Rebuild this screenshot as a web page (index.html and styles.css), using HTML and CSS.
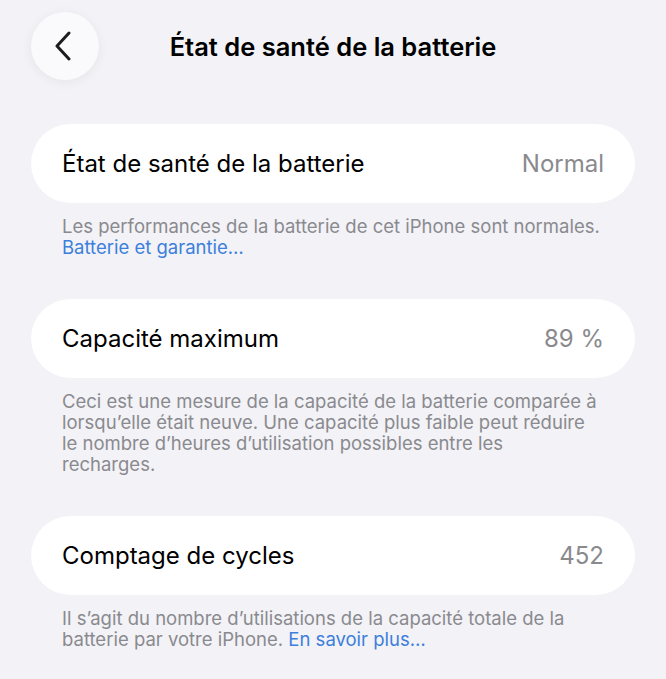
FILE: index.html
```html
<!DOCTYPE html>
<html lang="fr">
<head>
    <meta charset="UTF-8">
    <meta name="viewport" content="width=device-width, initial-scale=1.0">
    <title>État de santé de la batterie</title>
    <link rel="stylesheet" href="styles.css">
</head>
<body>

    <header class="nav">
        <button class="back" type="button" aria-label="Retour">
            <svg width="20" height="30" viewBox="0 0 20 30">
                <polyline points="16,2 4,15 16,28" fill="none" stroke="#1c1c1e" stroke-width="3" stroke-linecap="round" stroke-linejoin="round"/>
            </svg>
        </button>
        <h1 class="nav-title">État de santé de la batterie</h1>
        <span></span>
    </header>

    <section class="group">
        <div class="row">
            <span class="row-label">État de santé de la batterie</span>
            <span class="row-value">Normal</span>
        </div>
        <p class="footer">Les performances de la batterie de cet iPhone sont normales.<br><a href="#">Batterie et garantie…</a></p>
    </section>

    <section class="group">
        <div class="row">
            <span class="row-label">Capacité maximum</span>
            <span class="row-value">89 %</span>
        </div>
        <p class="footer">Ceci est une mesure de la capacité de la batterie comparée à lorsqu’elle était neuve. Une capacité plus faible peut réduire le nombre d’heures d’utilisation possibles entre les recharges.</p>
    </section>

    <section class="group">
        <div class="row">
            <span class="row-label">Comptage de cycles</span>
            <span class="row-value">452</span>
        </div>
        <p class="footer">Il s’agit du nombre d’utilisations de la capacité totale de la batterie par votre iPhone. <a href="#">En savoir plus…</a></p>
    </section>

</body>
</html>
```

FILE: styles.css
```css
/* styles.css */

body {
    margin: 0;
    background: #f2f2f7;
    font-family: Inter, "Noto Sans", sans-serif;
    color: #000;
}

.nav {
    display: grid;
    grid-template-columns: 1fr auto 1fr;
    align-items: center;
    padding: 12px 31px 0;
    margin-bottom: 44px;
}

.back {
    width: 68px;
    height: 68px;
    border: none;
    border-radius: 50%;
    background: #fafafc;
    box-shadow: 0 2px 12px rgba(0, 0, 0, 0.06);
    display: flex;
    align-items: center;
    justify-content: center;
    padding: 0 4px 0 0;
}

.nav-title {
    margin: 0;
    font-size: 25.5px;
    font-weight: 600;
}

.group {
    margin: 0 31px 41px;
}

.row {
    display: flex;
    justify-content: space-between;
    align-items: center;
    height: 79px;
    padding: 0 31px;
    background: #fff;
    border-radius: 40px;
    font-size: 24px;
}

.row-value {
    color: #8a8a8e;
}

.footer {
    margin: 0;
    padding: 13px 35px 0 31px;
    font-size: 18.5px;
    line-height: 21px;
    color: #8a8a8e;
}

.footer a {
    color: #3d7fdb;
    text-decoration: none;
}
```
